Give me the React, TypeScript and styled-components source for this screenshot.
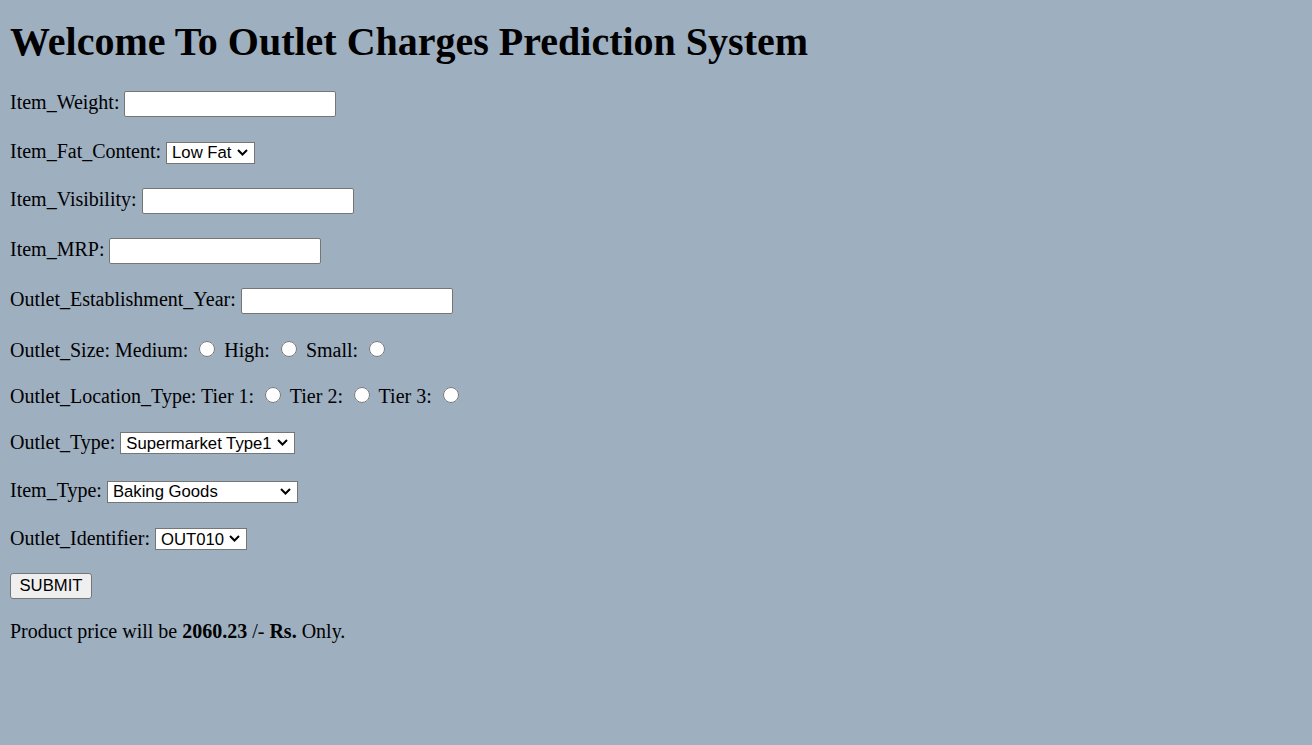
import React from "react";
import styled, { createGlobalStyle } from "styled-components";

const Global = createGlobalStyle`
  html, body { margin: 0; padding: 0; }
  body {
    background: #9eafc0;
    font-family: "Liberation Serif", "Times New Roman", serif;
    font-size: 20px;
    color: #000;
  }
`;

const Page = styled.div`
  padding: 18px 10px 10px 10px;
`;

const Title = styled.h1`
  font-size: 40px;
  font-weight: bold;
  margin: 0 0 26px 0;
  line-height: normal;
`;

const Form = styled.form`
  margin: 0;
`;

const Row = styled.p<{ $mt: number }>`
  margin: ${(p) => p.$mt}px 0 0 0;
  line-height: normal;
`;

const TextInput = styled.input`
  box-sizing: border-box;
  width: 212px;
  height: 26px;
  border: 1px solid #767676;
  border-radius: 2px;
  background: #fff;
  padding: 1px 2px;
  font-family: "Liberation Sans", Arial, sans-serif;
  font-size: 16.7px;
  vertical-align: baseline;
  margin: 0;
`;

const SelectWrap = styled.span`
  position: relative;
  display: inline-block;
`;

const Select = styled.select<{ $w: number }>`
  appearance: none;
  -webkit-appearance: none;
  box-sizing: border-box;
  width: ${(p) => p.$w}px;
  height: 22px;
  font-family: "Liberation Sans", Arial, sans-serif;
  font-size: 16.7px;
  color: #000;
  background: #fff;
  border: 1px solid #767676;
  border-radius: 0;
  margin: 0;
  padding: 0 20px 0 5px;
`;

const Chevron = styled.svg`
  position: absolute;
  right: 7px;
  top: 50%;
  width: 11px;
  height: 7px;
  margin-top: -3px;
  pointer-events: none;
`;

const Radio = styled.input`
  width: 16px;
  height: 16px;
  margin: 3px 4px 0 6px;
  vertical-align: baseline;
`;

const Submit = styled.button`
  box-sizing: border-box;
  width: 82px;
  height: 26px;
  font-family: "Liberation Sans", Arial, sans-serif;
  font-size: 16.7px;
  color: #000;
  background: #efefef;
  border: 1px solid #767676;
  border-radius: 3px;
  padding: 0;
  margin: 0;
`;

function Dropdown({ w, value, options }: { w: number; value: string; options: string[] }) {
  return (
    <SelectWrap>
      <Select $w={w} defaultValue={value}>
        {options.map((o) => (
          <option key={o}>{o}</option>
        ))}
      </Select>
      <Chevron viewBox="0 0 11 7">
        <path d="M1 1 L5.5 5.5 L10 1" fill="none" stroke="#000" strokeWidth="2" />
      </Chevron>
    </SelectWrap>
  );
}

export default function App() {
  return (
    <>
      <Global />
      <Page>
        <Title>Welcome To Outlet Charges Prediction System</Title>
        <Form onSubmit={(e) => e.preventDefault()}>
          <Row $mt={26}>
            Item_Weight: <TextInput type="text" />
          </Row>
          <Row $mt={23}>
            Item_Fat_Content:{" "}
            <Dropdown w={89} value="Low Fat" options={["Low Fat", "Regular"]} />
          </Row>
          <Row $mt={24}>
            Item_Visibility: <TextInput type="text" />
          </Row>
          <Row $mt={24}>
            Item_MRP: <TextInput type="text" />
          </Row>
          <Row $mt={24}>
            Outlet_Establishment_Year: <TextInput type="text" />
          </Row>
          <Row $mt={24}>
            Outlet_Size: Medium: <Radio type="radio" name="size" /> High:{" "}
            <Radio type="radio" name="size" /> Small: <Radio type="radio" name="size" />
          </Row>
          <Row $mt={22}>
            Outlet_Location_Type: Tier 1: <Radio type="radio" name="loc" /> Tier 2:{" "}
            <Radio type="radio" name="loc" /> Tier 3: <Radio type="radio" name="loc" />
          </Row>
          <Row $mt={23}>
            Outlet_Type:{" "}
            <Dropdown
              w={175}
              value="Supermarket Type1"
              options={["Supermarket Type1", "Supermarket Type2", "Supermarket Type3", "Grocery Store"]}
            />
          </Row>
          <Row $mt={25}>
            Item_Type:{" "}
            <Dropdown
              w={191}
              value="Baking Goods"
              options={[
                "Baking Goods",
                "Breads",
                "Breakfast",
                "Canned",
                "Dairy",
                "Frozen Foods",
                "Fruits and Vegetables",
                "Hard Drinks",
                "Health and Hygiene",
                "Household",
                "Meat",
                "Others",
                "Seafood",
                "Snack Foods",
                "Soft Drinks",
                "Starchy Foods",
              ]}
            />
          </Row>
          <Row $mt={24}>
            Outlet_Identifier:{" "}
            <Dropdown
              w={92}
              value="OUT010"
              options={["OUT010", "OUT013", "OUT017", "OUT018", "OUT019", "OUT027", "OUT035", "OUT045", "OUT046", "OUT049"]}
            />
          </Row>
          <Row $mt={23}>
            <Submit type="submit">SUBMIT</Submit>
          </Row>
          <Row $mt={21}>
            Product price will be <b>2060.23</b> /- <b>Rs.</b> Only.
          </Row>
        </Form>
      </Page>
    </>
  );
}
